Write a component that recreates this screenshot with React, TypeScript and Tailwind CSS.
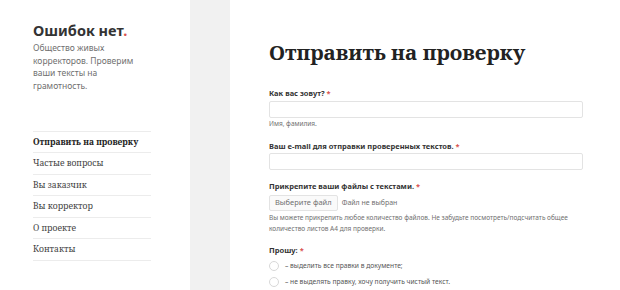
import React from "react";

const sans = { fontFamily: '"Noto Sans", "Open Sans", sans-serif' };
const serif = { fontFamily: '"Noto Serif", "DejaVu Serif", "Liberation Serif", serif' };

const nav = ["Отправить на проверку", "Частые вопросы", "Вы заказчик", "Вы корректор", "О проекте", "Контакты"];

function Radio({ text }: { text: string }) {
  return (
    <div className="flex items-center gap-[6px] h-[16px]">
      <span className="w-[10px] h-[10px] rounded-full border border-[#d8d8d8] bg-white shrink-0" />
      <span className="text-[6.7px] text-[#555]">{text}</span>
    </div>
  );
}

export default function App() {
  return (
    <div className="w-[620px] h-[290px] overflow-hidden flex bg-[#f1f1f1]" style={sans}>
      <aside className="w-[190px] shrink-0 bg-white pl-[33px] pt-[19px]">
        <div className="text-[14.5px] font-bold text-[#333] leading-[22px]">
          Ошибок нет<span className="text-[#d9534f]">.</span>
        </div>
        <p className="mt-[1px] text-[8.5px] leading-[12.7px] text-[#707070]">
          Общество живых
          <br />
          корректоров. Проверим
          <br />
          ваши тексты на
          <br />
          грамотность.
        </p>
        <nav className="mt-[38px] w-[118px] border-t border-[#ececec]" style={serif}>
          {nav.map((n, i) => (
            <div
              key={n}
              className={`h-[21.5px] flex items-center border-b border-[#ececec] text-[8.5px] whitespace-nowrap ${i === 0 ? "font-bold text-[#222]" : "text-[#444]"}`}
            >
              {n}
            </div>
          ))}
        </nav>
      </aside>
      <div className="w-[40px] shrink-0" />
      <main className="flex-1 bg-white pl-[39px] pt-[35px]">
        <h1 className="text-[20.7px] font-bold text-[#222] leading-[34px]" style={serif}>
          Отправить на проверку
        </h1>
        <div className="mt-[18px] w-[314px]">
          <div className="text-[7.5px] font-bold text-[#333] leading-[12px]">
            Как вас зовут? <span className="text-[#d9534f]">*</span>
          </div>
          <div className="mt-[2px] h-[17px] rounded-[2px] border border-[#e3e3e3] bg-white" />
          <div className="mt-[1px] text-[6.5px] text-[#707070] leading-[10px]">Имя, фамилия.</div>

          <div className="mt-[11px] text-[7.5px] font-bold text-[#333] leading-[12px]">
            Ваш e-mail для отправки проверенных текстов. <span className="text-[#d9534f]">*</span>
          </div>
          <div className="mt-[1px] h-[17px] rounded-[2px] border border-[#e3e3e3] bg-white" />

          <div className="mt-[10px] text-[7.5px] font-bold text-[#333] leading-[12px]">
            Прикрепите ваши файлы с текстами. <span className="text-[#d9534f]">*</span>
          </div>
          <div className="mt-[3px] flex items-center gap-[4px]">
            <div className="h-[16px] px-[5px] flex items-center rounded-[2px] border border-[#e3e3e3] bg-[#fafafa] text-[7.5px] text-[#707070]">
              Выберите файл
            </div>
            <span className="text-[7px] text-[#707070]">Файл не выбран</span>
          </div>
          <div className="mt-[1px] text-[6.5px] leading-[11px] text-[#707070] w-[310px]">
            Вы можете прикрепить любое количество файлов. Не забудьте посмотреть/подсчитать общее количество листов А4 для проверки.
          </div>

          <div className="mt-[10px] text-[7.5px] font-bold text-[#333] leading-[12px]">
            Прошу: <span className="text-[#d9534f]">*</span>
          </div>
          <div className="mt-[2px]">
            <Radio text="– выделить все правки в документе;" />
            <Radio text="– не выделять правку, хочу получить чистый текст." />
          </div>
        </div>
      </main>
    </div>
  );
}
